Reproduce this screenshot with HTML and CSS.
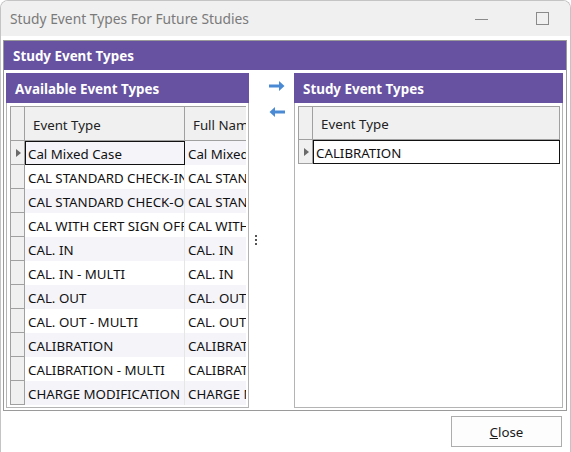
FILE: index.html
```html
<!DOCTYPE html>
<html>
<head>
<meta charset="utf-8">
<link rel="stylesheet" href="styles.css">
</head>
<body>
<div class="window">
  <div class="titlebar">
    <div class="title">Study Event Types For Future Studies</div>
    <div class="tb-buttons">
      <span class="tb-min"></span>
      <span class="tb-max"></span>
    </div>
  </div>
  <div class="group">
    <div class="group-head">Study Event Types</div>
    <div class="group-body">
      <div class="panel panel-left">
        <div class="panel-head">Available Event Types</div>
        <div class="grid grid-left">
          <div class="row head">
            <div class="rh"></div>
            <div class="c c1">Event Type</div>
            <div class="c c2">Full Name</div>
          </div>
          <div class="row alt sel">
            <div class="rh"><span class="tri"></span></div>
            <div class="c c1 cur">Cal Mixed Case</div>
            <div class="c c2">Cal Mixed Case</div>
          </div>
          <div class="row">
            <div class="rh"></div>
            <div class="c c1">CAL STANDARD CHECK-IN</div>
            <div class="c c2">CAL STANDARD CHECK-IN</div>
          </div>
          <div class="row alt">
            <div class="rh"></div>
            <div class="c c1">CAL STANDARD CHECK-OUT</div>
            <div class="c c2">CAL STANDARD CHECK-OUT</div>
          </div>
          <div class="row">
            <div class="rh"></div>
            <div class="c c1">CAL WITH CERT SIGN OFF</div>
            <div class="c c2">CAL WITH CERT SIGN OFF</div>
          </div>
          <div class="row alt">
            <div class="rh"></div>
            <div class="c c1">CAL. IN</div>
            <div class="c c2">CAL. IN</div>
          </div>
          <div class="row">
            <div class="rh"></div>
            <div class="c c1">CAL. IN - MULTI</div>
            <div class="c c2">CAL. IN</div>
          </div>
          <div class="row alt">
            <div class="rh"></div>
            <div class="c c1">CAL. OUT</div>
            <div class="c c2">CAL. OUT</div>
          </div>
          <div class="row">
            <div class="rh"></div>
            <div class="c c1">CAL. OUT - MULTI</div>
            <div class="c c2">CAL. OUT</div>
          </div>
          <div class="row alt">
            <div class="rh"></div>
            <div class="c c1">CALIBRATION</div>
            <div class="c c2">CALIBRATION</div>
          </div>
          <div class="row">
            <div class="rh"></div>
            <div class="c c1">CALIBRATION - MULTI</div>
            <div class="c c2">CALIBRATION</div>
          </div>
          <div class="row alt">
            <div class="rh"></div>
            <div class="c c1">CHARGE MODIFICATION</div>
            <div class="c c2">CHARGE MODIFICATION</div>
          </div>
        </div>
      </div>
      <div class="middle">
        <div class="arrows">
          <svg class="arrow" width="16" height="12" viewBox="0 0 16 12">
            <path d="M0 4.5 H10 V1 L15.5 6 L10 11 V7.5 H0 Z" fill="#4a8ad4"/>
          </svg>
          <svg class="arrow" width="16" height="12" viewBox="0 0 16 12">
            <path d="M16 4.5 H6 V1 L0.5 6 L6 11 V7.5 H16 Z" fill="#4a8ad4"/>
          </svg>
        </div>
        <div class="grip"><i></i><i></i><i></i></div>
      </div>
      <div class="panel panel-right">
        <div class="panel-head">Study Event Types</div>
        <div class="grid grid-right">
          <div class="row head">
            <div class="rh"></div>
            <div class="c c-full">Event Type</div>
          </div>
          <div class="row sel">
            <div class="rh"><span class="tri"></span></div>
            <div class="c c-full cur">CALIBRATION</div>
          </div>
        </div>
      </div>
    </div>
  </div>
  <div class="footer">
    <button class="btn"><u>C</u>lose</button>
  </div>
</div>
</body>
</html>
```
FILE: styles.css
```css
* { box-sizing: border-box; }
html, body { margin: 0; padding: 0; }
body {
  width: 571px;
  height: 452px;
  background: #ffffff;
  font-family: "Noto Sans", "Open Sans", sans-serif;
  font-size: 13.3px;
  color: #111111;
  overflow: hidden;
}
.window {
  width: 571px;
  height: 452px;
  border: 1px solid #c4c4c4;
  border-bottom: none;
  border-radius: 8px 8px 0 0;
  background: #ffffff;
  display: flex;
  flex-direction: column;
  overflow: hidden;
}
.titlebar {
  height: 35px;
  flex: none;
  background: #f0f0f0;
  display: flex;
  align-items: center;
  justify-content: space-between;
}
.title {
  padding-left: 9px;
  padding-bottom: 1px;
  font-size: 13.8px;
  color: #7a7a7a;
}
.tb-buttons {
  display: flex;
  align-items: center;
  margin-right: 21px;
}
.tb-min {
  width: 13px;
  height: 1px;
  background: #8a8a8a;
  margin-right: 48px;
  margin-top: 1px;
}
.tb-max {
  width: 13px;
  height: 13px;
  border: 1px solid #8a8a8a;
  margin-top: -1px;
}
.group {
  flex: none;
  height: 371px;
  margin: 4px 3px 0 2px;
  border: 1px solid #9a9a9a;
  display: flex;
  flex-direction: column;
}
.group-head {
  height: 29px;
  flex: none;
  background: #6652a0;
  color: #ffffff;
  font-weight: bold;
  font-size: 13.4px;
  padding-left: 9px;
  padding-top: 1px;
  display: flex;
  align-items: center;
}
.group-body {
  flex: 1;
  display: flex;
  padding: 3px 2px 2px 2px;
  min-height: 0;
}
.panel {
  border: 1px solid #b4b4b4;
  display: flex;
  flex-direction: column;
  min-height: 0;
}
.panel-left { width: 243px; flex: none; }
.panel-right { width: 269px; flex: none; }
.panel-head {
  height: 30px;
  flex: none;
  background: #6652a0;
  color: #ffffff;
  font-weight: bold;
  font-size: 13.4px;
  padding-left: 9px;
  padding-top: 2px;
  display: flex;
  align-items: center;
  margin: -1px -1px 0 -1px;
}
.middle {
  width: 45px;
  flex: none;
  position: relative;
}
.arrows {
  display: flex;
  flex-direction: column;
  align-items: center;
  gap: 14px;
  padding-top: 7px;
  padding-left: 11px;
}
.arrow { display: block; }
.grip {
  position: absolute;
  left: 6px;
  top: 162px;
  display: flex;
  flex-direction: column;
  gap: 2px;
}
.grip i {
  display: block;
  width: 2px;
  height: 2px;
  background: #555;
}
.grid {
  flex: 1;
  margin: 3px 2px 2px 3px;
  overflow: hidden;
  min-height: 0;
  background: #ffffff;
}
.grid-left { border-left: 1px solid #a0a0a0; border-top: 1px solid #a0a0a0; }
.row {
  display: flex;
  height: 24px;
  white-space: nowrap;
}
.row.head {
  height: 34px;
  background: #f0f0f0;
  border-bottom: 1px solid #a0a0a0;
}
.row.alt { background: #f4f4f9; }
.rh {
  width: 14px;
  flex: none;
  background: #f0f0f0;
  border-right: 1px solid #a0a0a0;
  border-bottom: 1px solid #a0a0a0;
  display: flex;
  align-items: center;
  justify-content: center;
}
.row.head .rh { border-bottom: none; }
.tri {
  width: 0;
  height: 0;
  border-top: 4px solid transparent;
  border-bottom: 4px solid transparent;
  border-left: 5px solid #6a6a6a;
  margin-left: 1px;
}
.c {
  overflow: hidden;
  display: flex;
  align-items: center;
  padding-left: 3px;
  padding-top: 2px;
  border-right: 1px solid #e6e6e6;
  flex: none;
}
.row.head .c {
  padding-left: 8px;
  padding-top: 2px;
  border-right: 1px solid #a0a0a0;
  color: #222;
}
.c1 { width: 160px; }
.c2 { width: 100px; }
.c-full { width: 247px; }
.cur {
  border: 1px solid #111111;
  padding-left: 2px;
}
.grid-right .row.head {
  border-top: 1px solid #a0a0a0;
  border-left: 1px solid #a0a0a0;
  border-right: 1px solid #a0a0a0;
}
.grid-right .row.sel {
  border-left: 1px solid #a0a0a0;
}
.grid-right .row.sel .rh { border-bottom: 1px solid #a0a0a0; }
.footer {
  flex: 1;
  display: flex;
  justify-content: flex-end;
  align-items: flex-start;
  padding-top: 5px;
  padding-right: 8px;
}
.btn {
  width: 111px;
  height: 31px;
  background: #fdfdfd;
  border: 1px solid #adadad;
  font-family: "Noto Sans", "Open Sans", sans-serif;
  font-size: 13.3px;
  color: #1a1a1a;
  padding: 0;
}
```
